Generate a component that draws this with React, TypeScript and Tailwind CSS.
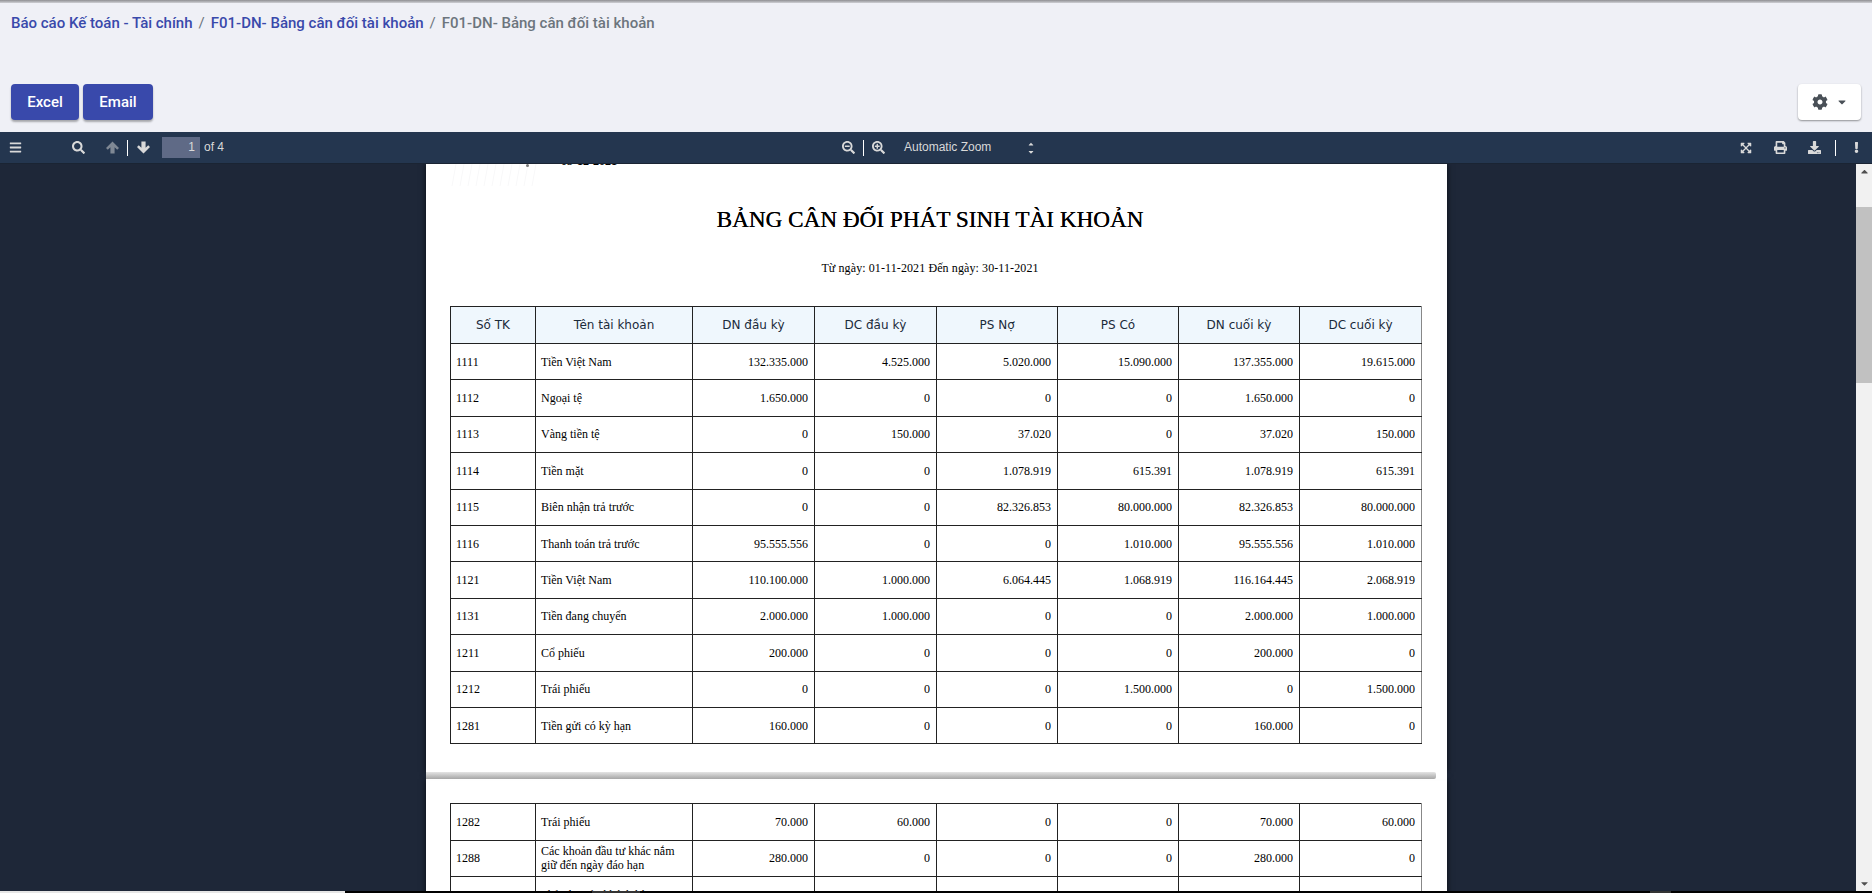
import React from "react";
import { FaBars, FaSearch, FaSearchMinus, FaSearchPlus, FaExpandArrowsAlt, FaPrint, FaDownload, FaExclamation, FaCog, FaCaretDown, FaCaretUp } from "react-icons/fa";

const rows1 = [
  ["1111", "Tiền Việt Nam", "132.335.000", "4.525.000", "5.020.000", "15.090.000", "137.355.000", "19.615.000"],
  ["1112", "Ngoại tệ", "1.650.000", "0", "0", "0", "1.650.000", "0"],
  ["1113", "Vàng tiền tệ", "0", "150.000", "37.020", "0", "37.020", "150.000"],
  ["1114", "Tiền mặt", "0", "0", "1.078.919", "615.391", "1.078.919", "615.391"],
  ["1115", "Biên nhận trả trước", "0", "0", "82.326.853", "80.000.000", "82.326.853", "80.000.000"],
  ["1116", "Thanh toán trả trước", "95.555.556", "0", "0", "1.010.000", "95.555.556", "1.010.000"],
  ["1121", "Tiền Việt Nam", "110.100.000", "1.000.000", "6.064.445", "1.068.919", "116.164.445", "2.068.919"],
  ["1131", "Tiền đang chuyển", "2.000.000", "1.000.000", "0", "0", "2.000.000", "1.000.000"],
  ["1211", "Cổ phiếu", "200.000", "0", "0", "0", "200.000", "0"],
  ["1212", "Trái phiếu", "0", "0", "0", "1.500.000", "0", "1.500.000"],
  ["1281", "Tiền gửi có kỳ hạn", "160.000", "0", "0", "0", "160.000", "0"],
];
const rows2 = [
  ["1282", "Trái phiếu", "70.000", "60.000", "0", "0", "70.000", "60.000"],
  ["1288", "Các khoản đầu tư khác nắm giữ đến ngày đáo hạn", "280.000", "0", "0", "0", "280.000", "0"],
  ["131", "Phải thu của khách hàng", "320.000", "400.000", "0", "0", "320.000", "400.000"],
];
const heads = ["Số TK", "Tên tài khoản", "DN đầu kỳ", "DC đầu kỳ", "PS Nợ", "PS Có", "DN cuối kỳ", "DC cuối kỳ"];

function Colgroup() {
  return (
    <colgroup>
      <col className="w-[85px]" />
      <col className="w-[157px]" />
      <col className="w-[122px]" />
      <col className="w-[122px]" />
      <col className="w-[121px]" />
      <col className="w-[121px]" />
      <col className="w-[121px]" />
      <col className="w-[122px]" />
    </colgroup>
  );
}

function Body({ rows }: { rows: string[][] }) {
  return (
    <tbody>
      {rows.map((r) => (
        <tr key={r[0]} className="h-[36.4px]">
          {r.map((c, i) => (
            <td
              key={i}
              className={`border border-[#222] py-0 leading-[14px] last:border-r-[#888] ${i < 2 ? "pl-[5px] pr-[5px] text-left" : "pl-[5px] pr-[6px] text-right"}`}
            >
              {c}
            </td>
          ))}
        </tr>
      ))}
    </tbody>
  );
}

function Sep() {
  return <span className="mx-[8px] h-[16px] w-px bg-white" />;
}

function ArrowIcon({ down, dim }: { down?: boolean; dim?: boolean }) {
  return (
    <svg viewBox="0 0 13 13" className={`h-[13px] w-[13px] ${down ? "rotate-180" : ""} ${dim ? "opacity-50" : ""}`} fill="currentColor">
      <path d="M6.5 0.5 L13 7 L11.2 8.8 L8.6 6.2 V12.5 H4.4 V6.2 L1.8 8.8 L0 7 Z" />
    </svg>
  );
}

export default function App() {
  return (
    <div className="flex h-[893px] flex-col overflow-hidden bg-black font-['Roboto',sans-serif]">
      <div className="h-[3px] shrink-0 bg-gradient-to-b from-[#8f8f93] to-[#cfd0d5]" />
      <div className="flex h-[129px] shrink-0 flex-col bg-[#eff0f6] px-[11px]">
        <div className="flex h-[41px] items-center text-[15px] font-medium text-[#3949ab]">
          <span>Báo cáo Kế toán - Tài chính</span>
          <span className="mx-[6px] font-normal text-[#6c757d]">/</span>
          <span>F01-DN- Bảng cân đối tài khoản</span>
          <span className="mx-[6px] font-normal text-[#6c757d]">/</span>
          <span className="text-[#6c757d]">F01-DN- Bảng cân đối tài khoản</span>
        </div>
        <div className="mt-[40px] flex items-start">
          <button className="h-[36px] w-[68px] rounded-[4px] bg-[#3949ab] text-[15px] font-medium text-white shadow-[0_2px_2px_rgba(0,0,0,0.3)]">Excel</button>
          <button className="ml-[4px] h-[36px] w-[70px] rounded-[4px] bg-[#3949ab] text-[15px] font-medium text-white shadow-[0_2px_2px_rgba(0,0,0,0.3)]">Email</button>
          <button className="ml-auto flex h-[36px] w-[63px] items-center justify-center gap-[8px] rounded-[4px] bg-white text-[#495057] shadow-[0_1px_2px_rgba(0,0,0,0.4)]">
            <FaCog className="text-[16px]" />
            <FaCaretDown className="text-[12px]" />
          </button>
        </div>
      </div>
      <div className="flex h-[32px] shrink-0 items-center border-b border-[#1a2433] bg-[#24364f] font-['Liberation_Sans',sans-serif] text-[12px] text-[#d9d9d9]">
        <div className="flex w-[842px] items-center">
          <FaBars className="ml-[9px] text-[13px]" />
          <FaSearch className="ml-[50px] text-[13px]" />
          <span className="ml-[21px]"><ArrowIcon dim /></span>
          <Sep />
          <span className="ml-[1px]"><ArrowIcon down /></span>
          <div className="ml-[12px] flex h-[21px] w-[38px] items-center justify-end bg-[#5f6a86] pb-[2px] pr-[5px]">1</div>
          <span className="ml-[4px] pb-[2px]">of 4</span>
        </div>
        <div className="flex items-center">
          <FaSearchMinus className="text-[13px]" />
          <Sep />
          <FaSearchPlus className="text-[13px]" />
          <span className="ml-[19px] pb-[2px]">Automatic Zoom</span>
          <span className="ml-[36px] flex flex-col text-[8px] leading-[7px]">
            <FaCaretUp />
            <FaCaretDown />
          </span>
        </div>
        <div className="ml-auto flex items-center justify-end pr-[10px]">
          <FaExpandArrowsAlt className="text-[12px]" />
          <FaPrint className="ml-[22px] text-[13px]" />
          <FaDownload className="ml-[21px] text-[13px]" />
          <span className="ml-[14px] h-[16px] w-px bg-white" />
          <FaExclamation className="ml-[15px] text-[11px]" />
        </div>
      </div>
      <div className="flex h-[727px] shrink-0 overflow-hidden">
        <main className="flex min-w-0 flex-1 flex-col items-center overflow-hidden bg-[#1e2738] pl-[17px]">
          <section className="relative flex w-[1021px] shrink-0 flex-col bg-white pb-[28px] pl-[24px] pr-[26px] font-['Liberation_Serif',serif] text-[12px] text-black shadow-[0_0_6px_rgba(0,0,0,0.7)]">
            <svg viewBox="0 0 95 22" className="absolute left-[24px] top-0 h-[22px] w-[95px]" fill="none" stroke="#f8f8f9" strokeWidth="1">
              <path d="M2 22 L6 0 M10 22 L14 0 M18 22 L22 0 M26 22 L30 0 M34 22 L38 0 M42 22 L46 0 M50 22 L54 0 M58 22 L62 0 M66 22 L70 0 M74 22 L78 0 M82 22 L86 0" />
            </svg>
            <span className="absolute left-[100px] top-0 h-[3px] w-[3px] rounded-full bg-[#777]" />
            <span className="absolute left-[135px] top-[-10px] whitespace-nowrap font-bold leading-[14px]">05-12-2021</span>
            <h1 className="relative mt-[39px] pr-[11px] text-center text-[23.2px] leading-[32px] font-normal [text-shadow:0.2px_0_0_#000]">BẢNG CÂN ĐỐI PHÁT SINH TÀI KHOẢN</h1>
            <p className="mt-[26px] pr-[11px] text-center leading-[14px] tracking-[0.1px]">Từ ngày: 01-11-2021 Đến ngày: 30-11-2021</p>
            <table className="mt-[31px] w-[971px] table-fixed border-collapse">
              <Colgroup />
              <thead>
                <tr className="h-[37px] bg-[#eff7fd] font-['DejaVu_Sans',sans-serif]">
                  {heads.map((h) => (
                    <th key={h} className="border border-[#222] p-0 text-center text-[12px] font-normal text-[#1a2a3a] last:border-r-[#888]">{h}</th>
                  ))}
                </tr>
              </thead>
              <Body rows={rows1} />
            </table>
          </section>
          <div className="relative h-[7px] w-[1021px] shrink-0 bg-white">
            <div className="absolute inset-y-0 left-0 right-[11px] rounded-r-[2px] bg-gradient-to-b from-[#e4e4e4] to-[#a6a6a6]" />
          </div>
          <section className="flex w-[1021px] shrink-0 flex-col bg-white pl-[24px] pr-[26px] pt-[24px] font-['Liberation_Serif',serif] text-[12px] text-black shadow-[0_0_6px_rgba(0,0,0,0.7)]">
            <table className="w-[971px] table-fixed border-collapse">
              <Colgroup />
              <Body rows={rows2} />
            </table>
          </section>
        </main>
        <aside className="flex w-[16px] shrink-0 flex-col items-center bg-[#f1f1f1] text-[#505050]">
          <FaCaretUp className="mt-[2px] text-[11px]" />
          <div className="mt-[30px] h-[176px] w-full bg-[#c1c1c1]" />
          <FaCaretDown className="mb-[2px] mt-auto text-[11px]" />
        </aside>
      </div>
      <div className="flex h-[2px] shrink-0">
        <div className="w-[345px] bg-[#e6e6e6]" />
        <div className="ml-[247px] w-[48px] bg-[#333]" />
        <div className="ml-[1010px] w-[21px] bg-[#333]" />
      </div>
    </div>
  );
}
